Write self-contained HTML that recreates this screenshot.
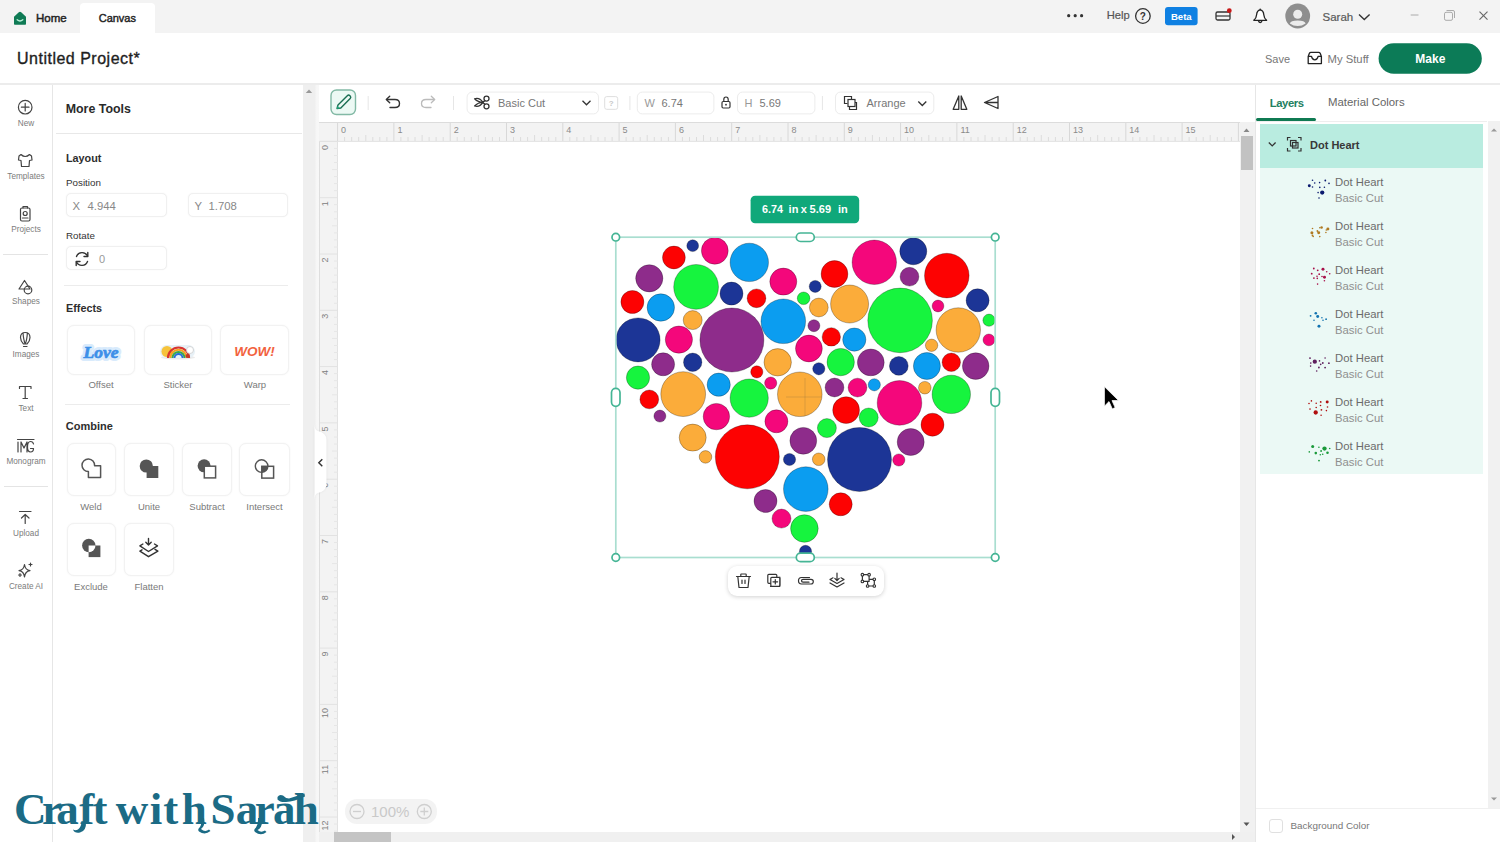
<!DOCTYPE html>
<html><head><meta charset="utf-8">
<style>
*{box-sizing:border-box;margin:0;padding:0}
html,body{width:1500px;height:842px;overflow:hidden;background:#fff;font-family:"Liberation Sans",sans-serif;color:#333}
.a{position:absolute}
.t{position:absolute;white-space:nowrap;line-height:1}
svg{position:absolute;overflow:visible}
svg text{font-family:"Liberation Sans",sans-serif}
svg text.sf{font-family:"Liberation Serif",serif}
.lrow{position:absolute;left:1260px;width:223px;height:44px}
.lt1{position:absolute;left:75px;top:9px;font-size:11.3px;color:#6b6b6b;white-space:nowrap}
.lt2{position:absolute;left:75px;top:25px;font-size:11.3px;color:#8f8f8f;white-space:nowrap}
.card{position:absolute;border:1px solid #f2f2f2;border-radius:7px;background:#fff;box-shadow:0 0 2px rgba(0,0,0,0.05)}
.lbl{position:absolute;font-size:9.5px;color:#7a7a7a;text-align:center;white-space:nowrap}
.sbl{position:absolute;left:0;width:52px;text-align:center;font-size:8.2px;color:#7c7c7c;white-space:nowrap}
.inp{position:absolute;border:1px solid #f0f0f0;border-radius:5px;background:#fff;box-shadow:0 0 1.5px rgba(0,0,0,0.06)}
</style></head>
<body>
<!-- top bar -->
<div class="a" style="left:0;top:0;width:1500px;height:33px;background:#f3f3f3"></div>
<div class="a" style="left:80px;top:2.5px;width:75px;height:31px;background:#fff;border-radius:4px 4px 0 0"></div>
<svg style="left:0;top:0" width="1500" height="33">
  <path d="M14 16.8 L18.8 12.3 Q20 11.3 21.2 12.3 L26 16.8 L26 24 Q26 24.8 25.2 24.8 L14.8 24.8 Q14 24.8 14 24 Z" fill="#0f7b55"/>
  <path d="M17.2 19.8 Q20 22.3 22.8 19.8" stroke="#b8f0d8" stroke-width="1.4" fill="none" stroke-linecap="round"/>
  <circle cx="1068.7" cy="15.7" r="1.6" fill="#333"/><circle cx="1075.2" cy="15.7" r="1.6" fill="#333"/><circle cx="1081.6" cy="15.7" r="1.6" fill="#333"/>
  <circle cx="1142.9" cy="16" r="7.3" fill="none" stroke="#333" stroke-width="1.3"/>
  <text x="1142.9" y="19.8" font-size="10" font-weight="bold" fill="#333" text-anchor="middle">?</text>
  <rect x="1165" y="7" width="32.6" height="18.3" rx="3" fill="#0f80e2"/>
  <text x="1181.3" y="19.7" font-size="9.6" font-weight="bold" fill="#fff" text-anchor="middle">Beta</text>
  <rect x="1216" y="12" width="14" height="8" rx="1.5" fill="none" stroke="#333" stroke-width="1.3"/>
  <line x1="1216" y1="16" x2="1230" y2="16" stroke="#333" stroke-width="1.2"/>
  <circle cx="1229.3" cy="10.7" r="2.4" fill="#c81818"/>
  <path d="M1253.8 20.3 Q1256.4 18.2 1256.6 14.8 Q1256.9 10.3 1260.2 9.8 Q1263.5 10.3 1263.8 14.8 Q1264 18.2 1266.6 20.3 Z" fill="#fff" stroke="#222" stroke-width="1.3" stroke-linejoin="round"/>
  <path d="M1258.4 21.2 Q1260.2 24 1262 21.2" fill="none" stroke="#222" stroke-width="1.4"/><circle cx="1260.2" cy="9.2" r="0.8" fill="#222"/>
  <circle cx="1297.7" cy="16" r="12.4" fill="#8e8e8e"/>
  <circle cx="1297.7" cy="14.3" r="4.5" fill="#ececec"/>
  <path d="M1289.8 23.5 Q1290.5 20.5 1297.7 20.5 Q1304.9 20.5 1305.6 23.5 Q1302 26.1 1297.7 26.1 Q1293.4 26.1 1289.8 23.5 Z" fill="#ececec"/>
  <path d="M1359 14.5 L1364.3 19.5 L1369.6 14.5" fill="none" stroke="#333" stroke-width="1.4"/>
  <line x1="1410.7" y1="15" x2="1418.5" y2="15" stroke="#aaa" stroke-width="1"/>
  <rect x="1444.5" y="12.3" width="8" height="8" rx="1.5" fill="none" stroke="#aaa" stroke-width="1"/>
  <path d="M1446.5 10.5 L1453 10.5 Q1454.5 10.5 1454.5 12 L1454.5 18" fill="none" stroke="#aaa" stroke-width="1"/>
  <path d="M1479.5 11.6 L1487.5 19.6 M1487.5 11.6 L1479.5 19.6" stroke="#666" stroke-width="1.1"/>
</svg>
<div class="t" style="left:36px;top:12.6px;font-size:11.5px;color:#222;-webkit-text-stroke:0.45px #222">Home</div>
<div class="t" style="left:98.7px;top:12.5px;font-size:11px;color:#222;-webkit-text-stroke:0.4px #222">Canvas</div>
<div class="t" style="left:1106.7px;top:10.4px;font-size:11.2px;color:#555;-webkit-text-stroke:0.2px #555">Help</div>
<div class="t" style="left:1322.5px;top:11.5px;font-size:11.5px;color:#5a5a5a;-webkit-text-stroke:0.2px #5a5a5a">Sarah</div>

<!-- header -->
<div class="a" style="left:0;top:82.5px;width:1500px;height:2px;background:#ececec"></div>
<div class="t" style="left:17px;top:51px;font-size:16px;color:#1e1e1e;letter-spacing:0.5px;-webkit-text-stroke:0.35px #1e1e1e">Untitled Project*</div>
<div class="t" style="left:1265px;top:54px;font-size:11px;color:#777">Save</div>
<svg style="left:0;top:0" width="1500" height="84">
  <path d="M1308.2 63.6 L1321.4 63.6 L1321.4 56.5 L1320.3 53.5 Q1319.8 52.4 1318.6 52.4 L1311 52.4 Q1309.8 52.4 1309.3 53.5 L1308.2 56.5 Z M1308.2 56.3 L1311.5 56.3 Q1312.3 59.8 1314.8 59.8 Q1317.3 59.8 1318.1 56.3 L1321.4 56.3" fill="none" stroke="#222" stroke-width="1.3" stroke-linejoin="round"/>
  <rect x="1378.6" y="43.3" width="103.2" height="30.4" rx="15.2" fill="#0c7b57"/>
  <text x="1430.3" y="62.8" font-size="12" font-weight="bold" fill="#fff" text-anchor="middle">Make</text>
</svg>
<div class="t" style="left:1327.5px;top:53.5px;font-size:11.3px;color:#777">My Stuff</div>

<!-- left sidebar -->
<div class="a" style="left:52px;top:85px;width:1px;height:757px;background:#e6e6e6"></div>
<div class="a" style="left:3px;top:254.2px;width:44.5px;height:1.2px;background:#e4e4e4"></div>
<div class="a" style="left:4px;top:486px;width:44px;height:1.2px;background:#e4e4e4"></div>
<svg style="left:0;top:0" width="52" height="842">
  <g fill="none" stroke="#444" stroke-width="1.2" stroke-linejoin="round" stroke-linecap="round">
  <circle cx="25.2" cy="107.2" r="6.8"/><path d="M25.2 103.4 V111 M21.4 107.2 H29"/>
  <path d="M21 154.5 L19 156 L18.5 160 L21 160.5 L21.5 166.5 L29 166.5 L29.5 160.5 L32 160 L31.5 156 L29.5 154.5 Q27.5 156.5 25.2 156.5 Q23 156.5 21 154.5 Z"/>
  <rect x="20.5" y="208" width="9.5" height="13" rx="1.5"/><circle cx="25.2" cy="213.5" r="2"/><path d="M22.5 218 H28"/><path d="M23 208 V206.5 H27.5 V208"/>
  <path d="M19 289 L24.5 280.5 L30 289 Z"/><circle cx="28" cy="290" r="3.8"/>
  <path d="M25.2 332.5 Q20.5 332.5 20.5 337.5 Q20.5 341 23.5 344 L27 344 Q30 341 30 337.5 Q30 332.5 25.2 332.5 Z M23 332.8 Q23.5 340 25.2 344 M27.4 332.8 Q27 340 25.2 344 M23.5 346.5 H27"/>
  <path d="M19.5 386.5 H31 M25.2 386.5 V398.5 M19.5 386.5 V388.5 M31 386.5 V388.5 M23 398.5 H27.5"/>
  <path d="M17.5 439.5 H34 M18 442 V452 M21 442 V452 M21 442 L24 448 L27 442 V452 M33.5 444 Q33 441.5 30.5 441.5 Q27.5 441.5 27.5 447 Q27.5 452 30.5 452 Q33.5 452 33.5 448.5 H30.5"/>
  <path d="M19.5 511.5 H31 M25.2 523.5 V514.5 M21.5 518 L25.2 514.5 L29 518"/>
  <path d="M24.5 564.5 Q25.2 570 30 570.7 Q25.2 571.4 24.5 577 Q23.8 571.4 19 570.7 Q23.8 570 24.5 564.5 Z"/>
  <path d="M30.5 563 L30.5 566 M29 564.5 H32 M20 573.5 V576.5 M18.5 575 H21.5"/>
  </g>
</svg>
<div class="sbl" style="top:118.5px">New</div>
<div class="sbl" style="top:172px">Templates</div>
<div class="sbl" style="top:225px">Projects</div>
<div class="sbl" style="top:297px">Shapes</div>
<div class="sbl" style="top:350px">Images</div>
<div class="sbl" style="top:403.5px">Text</div>
<div class="sbl" style="top:457px">Monogram</div>
<div class="sbl" style="top:529px">Upload</div>
<div class="sbl" style="top:582px">Create AI</div>

<!-- More tools panel -->
<div class="t" style="left:65.7px;top:103px;font-size:12.4px;font-weight:bold;color:#2a2a2a">More Tools</div>
<div class="a" style="left:56px;top:133px;width:246px;height:1px;background:#e8e8e8"></div>
<div class="t" style="left:66px;top:152.5px;font-size:10.8px;font-weight:bold;color:#2e2e2e">Layout</div>
<div class="t" style="left:66px;top:177.5px;font-size:9.8px;color:#333">Position</div>
<div class="inp" style="left:65.7px;top:192.6px;width:101.2px;height:24.4px"></div>
<div class="inp" style="left:188.2px;top:192.6px;width:100.2px;height:24.4px"></div>
<div class="t" style="left:72.5px;top:200.5px;font-size:11.3px;color:#888">X</div>
<div class="t" style="left:87.5px;top:200.5px;font-size:11.3px;color:#888">4.944</div>
<div class="t" style="left:194.5px;top:200.5px;font-size:11.3px;color:#888">Y</div>
<div class="t" style="left:208.5px;top:200.5px;font-size:11.3px;color:#888">1.708</div>
<div class="t" style="left:66px;top:230.5px;font-size:9.8px;color:#333">Rotate</div>
<div class="inp" style="left:65.7px;top:245.9px;width:101.2px;height:24.3px"></div>
<svg style="left:0;top:0" width="300" height="600">
  <g fill="none" stroke="#333" stroke-width="1.4" stroke-linecap="round">
  <path d="M76.5 256.5 A6 6 0 0 1 87.5 256"/><path d="M87.5 261.5 A6 6 0 0 1 76.5 262"/>
  <path d="M87.8 252.5 L87.8 256.5 L84 256.5" stroke-linejoin="round"/><path d="M76.2 265.5 L76.2 261.5 L80 261.5" stroke-linejoin="round"/>
  </g>
</svg>
<div class="t" style="left:99px;top:254px;font-size:11px;color:#999">0</div>
<div class="a" style="left:64px;top:284.5px;width:224px;height:1px;background:#ececec"></div>
<div class="t" style="left:66px;top:302.7px;font-size:10.8px;font-weight:bold;color:#2e2e2e">Effects</div>
<div class="card" style="left:66.5px;top:325.4px;width:68.5px;height:50px"></div>
<div class="card" style="left:143.6px;top:325.4px;width:68.5px;height:50px"></div>
<div class="card" style="left:219.8px;top:325.4px;width:69.4px;height:50px"></div>
<svg style="left:0;top:0" width="300" height="600">
  <text class="sf" x="101" y="357.5" font-size="17.5" font-weight="bold" font-style="italic" fill="#d9ebfc" stroke="#d9ebfc" stroke-width="6" stroke-linejoin="round" text-anchor="middle">Love</text>
  <text class="sf" x="101" y="357.5" font-size="17.5" font-weight="bold" font-style="italic" fill="#3d8fe8" stroke="#3d8fe8" stroke-width="0.7" text-anchor="middle">Love</text>
  <ellipse cx="178" cy="357.5" rx="17" ry="2" fill="rgba(0,0,0,0.08)"/>
  <rect x="160" y="345" width="35" height="13" rx="6.5" fill="#e8f1f7"/>
  <circle cx="167" cy="351.5" r="5.5" fill="#f6c33b"/>
  <path d="M168 358 A10.5 10.5 0 0 1 189 358" fill="none" stroke="#d8352f" stroke-width="2.2"/>
  <path d="M170.3 358 A8.2 8.2 0 0 1 186.7 358" fill="none" stroke="#f7a11a" stroke-width="2"/>
  <path d="M172.4 358 A6.1 6.1 0 0 1 184.6 358" fill="none" stroke="#3aa84a" stroke-width="2"/>
  <path d="M174.4 358 A4.1 4.1 0 0 1 182.6 358" fill="none" stroke="#2a6fd6" stroke-width="2"/>
  <circle cx="190" cy="350" r="3.5" fill="#fff" stroke="#ccc" stroke-width="0.8"/>
  <circle cx="187.5" cy="356" r="2" fill="#c0392b"/>
  <text x="254.5" y="355.5" font-size="13.5" font-weight="bold" font-style="italic" fill="#f2623e" text-anchor="middle" transform="translate(254.5,0) scale(1,1) translate(-254.5,0)">WOW!</text>
</svg>
<div class="lbl" style="left:66px;width:70px;top:379px">Offset</div>
<div class="lbl" style="left:143px;width:70px;top:379px">Sticker</div>
<div class="lbl" style="left:220px;width:70px;top:379px">Warp</div>
<div class="a" style="left:64.6px;top:403.5px;width:225px;height:1px;background:#ececec"></div>
<div class="t" style="left:65.8px;top:420.8px;font-size:11px;font-weight:bold;color:#2e2e2e">Combine</div>
<div class="card" style="left:66.5px;top:443.2px;width:49.7px;height:52.8px"></div>
<div class="card" style="left:124.2px;top:443.2px;width:49.9px;height:52.8px"></div>
<div class="card" style="left:182px;top:443.2px;width:50px;height:52.8px"></div>
<div class="card" style="left:239.4px;top:443.2px;width:50.4px;height:52.8px"></div>
<div class="card" style="left:66.5px;top:522.8px;width:49.7px;height:53.6px"></div>
<div class="card" style="left:124.2px;top:522.8px;width:49.9px;height:53.6px"></div>
<svg style="left:0;top:0" width="300" height="600">
  <path d="M88.4 477.6 L100.6 477.6 L100.6 465.7 L94.6 465.7 A6.3 6.3 0 1 0 88.4 471.6 Z" fill="none" stroke="#555" stroke-width="1.5" stroke-linejoin="round"/>
  <g fill="#555">
   <circle cx="146.3" cy="466" r="6.6"/><rect x="146.6" y="466" width="11.7" height="12"/>
   <circle cx="204.1" cy="465.8" r="6.5"/>
  </g>
  <rect x="204.3" y="466.2" width="11.3" height="11.7" fill="#fff" stroke="#555" stroke-width="1.5"/>
  <circle cx="261.6" cy="466.1" r="6.3" fill="none" stroke="#555" stroke-width="1.4"/>
  <rect x="261.8" y="466.3" width="11.8" height="11.8" fill="none" stroke="#555" stroke-width="1.5"/>
  <path d="M261.8 466.3 H267.9 A6.3 6.3 0 0 1 261.8 472.4 Z" fill="#555"/>
  <circle cx="88.8" cy="545.5" r="6.7" fill="#555"/>
  <rect x="88.6" y="545.5" width="11.8" height="11.6" fill="#555"/>
  <path d="M88.6 545.5 H95.5 A6.7 6.7 0 0 1 88.6 552.2 Z" fill="#fff"/>
  <g stroke="#333" stroke-width="1.4" fill="none" stroke-linejoin="round" stroke-linecap="round">
   <path d="M142.9 544 L139.9 545.9 L148.5 551.5 L157.5 545.9 L154.5 544"/>
   <path d="M142 549.8 L139.9 551.1 L148.5 556.7 L157.9 551.1 L155 549.3"/>
   <path d="M148.5 538.4 V545 M145.8 542.3 L148.5 545 L151.2 542.3"/>
  </g>
</svg>
<div class="lbl" style="left:66px;width:50px;top:501.3px">Weld</div>
<div class="lbl" style="left:124px;width:50px;top:501.3px">Unite</div>
<div class="lbl" style="left:182px;width:50px;top:501.3px">Subtract</div>
<div class="lbl" style="left:239px;width:51px;top:501.3px">Intersect</div>
<div class="lbl" style="left:66px;width:50px;top:580.5px">Exclude</div>
<div class="lbl" style="left:124px;width:50px;top:580.5px">Flatten</div>

<!-- panel scroll strip -->
<div class="a" style="left:302.5px;top:85px;width:16.5px;height:757px;background:linear-gradient(to right,#efefef 0,#efefef 12px,#f6f6f6 13px,#f8f8f8 16.5px)"></div>
<svg style="left:0;top:0" width="330" height="842">
  <path d="M305.8 93 L309 89.5 L312.2 93 Z" fill="#999"/>
</svg>

<!-- canvas toolbar -->
<svg style="left:0;top:0" width="1260" height="122">
  <rect x="331" y="90" width="24.5" height="24.5" rx="5.5" fill="#ecf9f4" stroke="#82b9a5" stroke-width="1.4"/>
  <path d="M337 108.5 L338 105 L347.3 95.7 Q348.6 94.5 349.9 95.7 L350.2 96 Q351.4 97.3 350.2 98.6 L340.8 108 Z" fill="none" stroke="#1a6e52" stroke-width="1.4" stroke-linejoin="round"/>
  <path d="M337 108.7 L337.6 106 L339.8 108.2 Z" fill="#22b586"/>
  <line x1="368.2" y1="96" x2="368.2" y2="110" stroke="#e6e6e6" stroke-width="1"/>
  <path d="M387 99.5 H395 Q399.5 99.5 399.5 103.5 Q399.5 107.5 395 107.5 H390" fill="none" stroke="#333" stroke-width="1.4" stroke-linecap="round"/>
  <path d="M389.7 96.3 L386.3 99.5 L389.7 102.7" fill="none" stroke="#333" stroke-width="1.4" stroke-linecap="round" stroke-linejoin="round"/>
  <path d="M434 99.5 H426 Q421.5 99.5 421.5 103.5 Q421.5 107.5 426 107.5 H431" fill="none" stroke="#bbb" stroke-width="1.3" stroke-linecap="round"/>
  <path d="M431.3 96.3 L434.7 99.5 L431.3 102.7" fill="none" stroke="#bbb" stroke-width="1.3" stroke-linecap="round" stroke-linejoin="round"/>
  <line x1="453.5" y1="96" x2="453.5" y2="110" stroke="#e6e6e6" stroke-width="1"/>
  <rect x="467.1" y="92.1" width="131.4" height="21.8" rx="5" fill="#fff" stroke="#ececec" stroke-width="1"/>
  <g fill="none" stroke="#333" stroke-width="1.3">
   <circle cx="486.5" cy="98.6" r="2.5"/><circle cx="486.5" cy="106.3" r="2.5"/>
   <path d="M474.6 98.8 Q479.5 97.2 483 102.4 Q478 102.4 474.6 98.8 Z M474.6 106 Q479.5 107.6 483 102.4 Q478 102.4 474.6 106 Z M482.5 102.4 L485 100.6 M482.5 102.4 L485 104.2" stroke-linejoin="round"/>
  </g>
  <path d="M582.5 100.8 L586.5 104.8 L590.5 100.8" fill="none" stroke="#333" stroke-width="1.3"/>
  <rect x="604.7" y="96.6" width="13" height="12.7" rx="2" fill="#fff" stroke="#dedede" stroke-width="1"/>
  <text x="611.2" y="106" font-size="8" fill="#c8c8c8" text-anchor="middle" font-weight="bold">?</text>
  <line x1="629.9" y1="96" x2="629.9" y2="110" stroke="#e6e6e6" stroke-width="1"/>
  <rect x="637.3" y="92.1" width="76.6" height="21.8" rx="5" fill="#fff" stroke="#ececec" stroke-width="1"/>
  <rect x="737.5" y="92.1" width="77.4" height="21.8" rx="5" fill="#fff" stroke="#ececec" stroke-width="1"/>
  <g fill="none" stroke="#333" stroke-width="1.2">
   <rect x="722" y="101.5" width="8" height="6.5" rx="1.2"/><path d="M723.8 101.5 V99.5 Q723.8 97 726 97 Q728.2 97 728.2 99.5 V101.5"/>
  </g>
  <circle cx="726" cy="104.7" r="0.9" fill="#333"/>
  <line x1="822.4" y1="96" x2="822.4" y2="110" stroke="#e6e6e6" stroke-width="1"/>
  <rect x="835.5" y="92.1" width="98.3" height="21.8" rx="5" fill="#fff" stroke="#ececec" stroke-width="1"/>
  <g fill="none" stroke="#333" stroke-width="1.2">
   <path d="M847.5 103.5 H844.5 V96.5 H851.5 V99"/><rect x="848" y="99.5" width="7" height="7"/><path d="M849.5 107 V109.5 H856.5 V102.5 H855"/>
  </g>
  <path d="M918.3 101.5 L922.3 105.5 L926.3 101.5" fill="none" stroke="#333" stroke-width="1.3"/>
  <g fill="none" stroke="#333" stroke-width="1.3" stroke-linejoin="round">
   <path d="M958.8 96 L953.2 109.3 H958.8 Z M961.2 96 L966.8 109.3 H961.2 Z"/>
   <path d="M998 96.5 L984.5 102.5 L998 108.5 Z M984.5 102.5 H998"/>
  </g>
</svg>
<div class="t" style="left:498px;top:97.5px;font-size:11px;color:#777">Basic Cut</div>
<div class="t" style="left:644.5px;top:97.5px;font-size:11px;color:#999">W</div>
<div class="t" style="left:661.5px;top:97.5px;font-size:11px;color:#777">6.74</div>
<div class="t" style="left:744.5px;top:97.5px;font-size:11px;color:#999">H</div>
<div class="t" style="left:759.5px;top:97.5px;font-size:11px;color:#777">5.69</div>
<div class="t" style="left:866.5px;top:97.5px;font-size:11px;color:#777">Arrange</div>

<!-- rulers -->
<div class="a" style="left:319px;top:122px;width:921px;height:19.4px;background:#f3f3f3;border-top:1px solid #dcdcdc"></div>
<div class="a" style="left:319px;top:141px;width:19px;height:691px;background:#f3f3f3;border-left:1px solid #dedede;border-right:1px solid #e2e2e2"></div>
<svg style="left:0;top:0" width="1500" height="842">
<line x1="337.6" y1="123" x2="337.6" y2="141" stroke="#d8d8d8" stroke-width="1"/>
<text x="341.1" y="133" font-size="9" fill="#8a8a8a">0</text>
<line x1="344.6" y1="137" x2="344.6" y2="141" stroke="#dcdcdc" stroke-width="1"/>
<line x1="351.7" y1="137" x2="351.7" y2="141" stroke="#dcdcdc" stroke-width="1"/>
<line x1="358.7" y1="137" x2="358.7" y2="141" stroke="#dcdcdc" stroke-width="1"/>
<line x1="365.8" y1="135" x2="365.8" y2="141" stroke="#dcdcdc" stroke-width="1"/>
<line x1="372.8" y1="137" x2="372.8" y2="141" stroke="#dcdcdc" stroke-width="1"/>
<line x1="379.8" y1="137" x2="379.8" y2="141" stroke="#dcdcdc" stroke-width="1"/>
<line x1="386.9" y1="137" x2="386.9" y2="141" stroke="#dcdcdc" stroke-width="1"/>
<line x1="393.9" y1="123" x2="393.9" y2="141" stroke="#d8d8d8" stroke-width="1"/>
<text x="397.4" y="133" font-size="9" fill="#8a8a8a">1</text>
<line x1="400.9" y1="137" x2="400.9" y2="141" stroke="#dcdcdc" stroke-width="1"/>
<line x1="408.0" y1="137" x2="408.0" y2="141" stroke="#dcdcdc" stroke-width="1"/>
<line x1="415.0" y1="137" x2="415.0" y2="141" stroke="#dcdcdc" stroke-width="1"/>
<line x1="422.1" y1="135" x2="422.1" y2="141" stroke="#dcdcdc" stroke-width="1"/>
<line x1="429.1" y1="137" x2="429.1" y2="141" stroke="#dcdcdc" stroke-width="1"/>
<line x1="436.1" y1="137" x2="436.1" y2="141" stroke="#dcdcdc" stroke-width="1"/>
<line x1="443.2" y1="137" x2="443.2" y2="141" stroke="#dcdcdc" stroke-width="1"/>
<line x1="450.2" y1="123" x2="450.2" y2="141" stroke="#d8d8d8" stroke-width="1"/>
<text x="453.7" y="133" font-size="9" fill="#8a8a8a">2</text>
<line x1="457.2" y1="137" x2="457.2" y2="141" stroke="#dcdcdc" stroke-width="1"/>
<line x1="464.3" y1="137" x2="464.3" y2="141" stroke="#dcdcdc" stroke-width="1"/>
<line x1="471.3" y1="137" x2="471.3" y2="141" stroke="#dcdcdc" stroke-width="1"/>
<line x1="478.4" y1="135" x2="478.4" y2="141" stroke="#dcdcdc" stroke-width="1"/>
<line x1="485.4" y1="137" x2="485.4" y2="141" stroke="#dcdcdc" stroke-width="1"/>
<line x1="492.4" y1="137" x2="492.4" y2="141" stroke="#dcdcdc" stroke-width="1"/>
<line x1="499.5" y1="137" x2="499.5" y2="141" stroke="#dcdcdc" stroke-width="1"/>
<line x1="506.5" y1="123" x2="506.5" y2="141" stroke="#d8d8d8" stroke-width="1"/>
<text x="510.0" y="133" font-size="9" fill="#8a8a8a">3</text>
<line x1="513.5" y1="137" x2="513.5" y2="141" stroke="#dcdcdc" stroke-width="1"/>
<line x1="520.6" y1="137" x2="520.6" y2="141" stroke="#dcdcdc" stroke-width="1"/>
<line x1="527.6" y1="137" x2="527.6" y2="141" stroke="#dcdcdc" stroke-width="1"/>
<line x1="534.6" y1="135" x2="534.6" y2="141" stroke="#dcdcdc" stroke-width="1"/>
<line x1="541.7" y1="137" x2="541.7" y2="141" stroke="#dcdcdc" stroke-width="1"/>
<line x1="548.7" y1="137" x2="548.7" y2="141" stroke="#dcdcdc" stroke-width="1"/>
<line x1="555.8" y1="137" x2="555.8" y2="141" stroke="#dcdcdc" stroke-width="1"/>
<line x1="562.8" y1="123" x2="562.8" y2="141" stroke="#d8d8d8" stroke-width="1"/>
<text x="566.3" y="133" font-size="9" fill="#8a8a8a">4</text>
<line x1="569.8" y1="137" x2="569.8" y2="141" stroke="#dcdcdc" stroke-width="1"/>
<line x1="576.9" y1="137" x2="576.9" y2="141" stroke="#dcdcdc" stroke-width="1"/>
<line x1="583.9" y1="137" x2="583.9" y2="141" stroke="#dcdcdc" stroke-width="1"/>
<line x1="590.9" y1="135" x2="590.9" y2="141" stroke="#dcdcdc" stroke-width="1"/>
<line x1="598.0" y1="137" x2="598.0" y2="141" stroke="#dcdcdc" stroke-width="1"/>
<line x1="605.0" y1="137" x2="605.0" y2="141" stroke="#dcdcdc" stroke-width="1"/>
<line x1="612.1" y1="137" x2="612.1" y2="141" stroke="#dcdcdc" stroke-width="1"/>
<line x1="619.1" y1="123" x2="619.1" y2="141" stroke="#d8d8d8" stroke-width="1"/>
<text x="622.6" y="133" font-size="9" fill="#8a8a8a">5</text>
<line x1="626.1" y1="137" x2="626.1" y2="141" stroke="#dcdcdc" stroke-width="1"/>
<line x1="633.2" y1="137" x2="633.2" y2="141" stroke="#dcdcdc" stroke-width="1"/>
<line x1="640.2" y1="137" x2="640.2" y2="141" stroke="#dcdcdc" stroke-width="1"/>
<line x1="647.2" y1="135" x2="647.2" y2="141" stroke="#dcdcdc" stroke-width="1"/>
<line x1="654.3" y1="137" x2="654.3" y2="141" stroke="#dcdcdc" stroke-width="1"/>
<line x1="661.3" y1="137" x2="661.3" y2="141" stroke="#dcdcdc" stroke-width="1"/>
<line x1="668.4" y1="137" x2="668.4" y2="141" stroke="#dcdcdc" stroke-width="1"/>
<line x1="675.4" y1="123" x2="675.4" y2="141" stroke="#d8d8d8" stroke-width="1"/>
<text x="678.9" y="133" font-size="9" fill="#8a8a8a">6</text>
<line x1="682.4" y1="137" x2="682.4" y2="141" stroke="#dcdcdc" stroke-width="1"/>
<line x1="689.5" y1="137" x2="689.5" y2="141" stroke="#dcdcdc" stroke-width="1"/>
<line x1="696.5" y1="137" x2="696.5" y2="141" stroke="#dcdcdc" stroke-width="1"/>
<line x1="703.5" y1="135" x2="703.5" y2="141" stroke="#dcdcdc" stroke-width="1"/>
<line x1="710.6" y1="137" x2="710.6" y2="141" stroke="#dcdcdc" stroke-width="1"/>
<line x1="717.6" y1="137" x2="717.6" y2="141" stroke="#dcdcdc" stroke-width="1"/>
<line x1="724.7" y1="137" x2="724.7" y2="141" stroke="#dcdcdc" stroke-width="1"/>
<line x1="731.7" y1="123" x2="731.7" y2="141" stroke="#d8d8d8" stroke-width="1"/>
<text x="735.2" y="133" font-size="9" fill="#8a8a8a">7</text>
<line x1="738.7" y1="137" x2="738.7" y2="141" stroke="#dcdcdc" stroke-width="1"/>
<line x1="745.8" y1="137" x2="745.8" y2="141" stroke="#dcdcdc" stroke-width="1"/>
<line x1="752.8" y1="137" x2="752.8" y2="141" stroke="#dcdcdc" stroke-width="1"/>
<line x1="759.9" y1="135" x2="759.9" y2="141" stroke="#dcdcdc" stroke-width="1"/>
<line x1="766.9" y1="137" x2="766.9" y2="141" stroke="#dcdcdc" stroke-width="1"/>
<line x1="773.9" y1="137" x2="773.9" y2="141" stroke="#dcdcdc" stroke-width="1"/>
<line x1="781.0" y1="137" x2="781.0" y2="141" stroke="#dcdcdc" stroke-width="1"/>
<line x1="788.0" y1="123" x2="788.0" y2="141" stroke="#d8d8d8" stroke-width="1"/>
<text x="791.5" y="133" font-size="9" fill="#8a8a8a">8</text>
<line x1="795.0" y1="137" x2="795.0" y2="141" stroke="#dcdcdc" stroke-width="1"/>
<line x1="802.1" y1="137" x2="802.1" y2="141" stroke="#dcdcdc" stroke-width="1"/>
<line x1="809.1" y1="137" x2="809.1" y2="141" stroke="#dcdcdc" stroke-width="1"/>
<line x1="816.1" y1="135" x2="816.1" y2="141" stroke="#dcdcdc" stroke-width="1"/>
<line x1="823.2" y1="137" x2="823.2" y2="141" stroke="#dcdcdc" stroke-width="1"/>
<line x1="830.2" y1="137" x2="830.2" y2="141" stroke="#dcdcdc" stroke-width="1"/>
<line x1="837.3" y1="137" x2="837.3" y2="141" stroke="#dcdcdc" stroke-width="1"/>
<line x1="844.3" y1="123" x2="844.3" y2="141" stroke="#d8d8d8" stroke-width="1"/>
<text x="847.8" y="133" font-size="9" fill="#8a8a8a">9</text>
<line x1="851.3" y1="137" x2="851.3" y2="141" stroke="#dcdcdc" stroke-width="1"/>
<line x1="858.4" y1="137" x2="858.4" y2="141" stroke="#dcdcdc" stroke-width="1"/>
<line x1="865.4" y1="137" x2="865.4" y2="141" stroke="#dcdcdc" stroke-width="1"/>
<line x1="872.4" y1="135" x2="872.4" y2="141" stroke="#dcdcdc" stroke-width="1"/>
<line x1="879.5" y1="137" x2="879.5" y2="141" stroke="#dcdcdc" stroke-width="1"/>
<line x1="886.5" y1="137" x2="886.5" y2="141" stroke="#dcdcdc" stroke-width="1"/>
<line x1="893.6" y1="137" x2="893.6" y2="141" stroke="#dcdcdc" stroke-width="1"/>
<line x1="900.6" y1="123" x2="900.6" y2="141" stroke="#d8d8d8" stroke-width="1"/>
<text x="904.1" y="133" font-size="9" fill="#8a8a8a">10</text>
<line x1="907.6" y1="137" x2="907.6" y2="141" stroke="#dcdcdc" stroke-width="1"/>
<line x1="914.7" y1="137" x2="914.7" y2="141" stroke="#dcdcdc" stroke-width="1"/>
<line x1="921.7" y1="137" x2="921.7" y2="141" stroke="#dcdcdc" stroke-width="1"/>
<line x1="928.8" y1="135" x2="928.8" y2="141" stroke="#dcdcdc" stroke-width="1"/>
<line x1="935.8" y1="137" x2="935.8" y2="141" stroke="#dcdcdc" stroke-width="1"/>
<line x1="942.8" y1="137" x2="942.8" y2="141" stroke="#dcdcdc" stroke-width="1"/>
<line x1="949.9" y1="137" x2="949.9" y2="141" stroke="#dcdcdc" stroke-width="1"/>
<line x1="956.9" y1="123" x2="956.9" y2="141" stroke="#d8d8d8" stroke-width="1"/>
<text x="960.4" y="133" font-size="9" fill="#8a8a8a">11</text>
<line x1="963.9" y1="137" x2="963.9" y2="141" stroke="#dcdcdc" stroke-width="1"/>
<line x1="971.0" y1="137" x2="971.0" y2="141" stroke="#dcdcdc" stroke-width="1"/>
<line x1="978.0" y1="137" x2="978.0" y2="141" stroke="#dcdcdc" stroke-width="1"/>
<line x1="985.0" y1="135" x2="985.0" y2="141" stroke="#dcdcdc" stroke-width="1"/>
<line x1="992.1" y1="137" x2="992.1" y2="141" stroke="#dcdcdc" stroke-width="1"/>
<line x1="999.1" y1="137" x2="999.1" y2="141" stroke="#dcdcdc" stroke-width="1"/>
<line x1="1006.2" y1="137" x2="1006.2" y2="141" stroke="#dcdcdc" stroke-width="1"/>
<line x1="1013.2" y1="123" x2="1013.2" y2="141" stroke="#d8d8d8" stroke-width="1"/>
<text x="1016.7" y="133" font-size="9" fill="#8a8a8a">12</text>
<line x1="1020.2" y1="137" x2="1020.2" y2="141" stroke="#dcdcdc" stroke-width="1"/>
<line x1="1027.3" y1="137" x2="1027.3" y2="141" stroke="#dcdcdc" stroke-width="1"/>
<line x1="1034.3" y1="137" x2="1034.3" y2="141" stroke="#dcdcdc" stroke-width="1"/>
<line x1="1041.3" y1="135" x2="1041.3" y2="141" stroke="#dcdcdc" stroke-width="1"/>
<line x1="1048.4" y1="137" x2="1048.4" y2="141" stroke="#dcdcdc" stroke-width="1"/>
<line x1="1055.4" y1="137" x2="1055.4" y2="141" stroke="#dcdcdc" stroke-width="1"/>
<line x1="1062.5" y1="137" x2="1062.5" y2="141" stroke="#dcdcdc" stroke-width="1"/>
<line x1="1069.5" y1="123" x2="1069.5" y2="141" stroke="#d8d8d8" stroke-width="1"/>
<text x="1073.0" y="133" font-size="9" fill="#8a8a8a">13</text>
<line x1="1076.5" y1="137" x2="1076.5" y2="141" stroke="#dcdcdc" stroke-width="1"/>
<line x1="1083.6" y1="137" x2="1083.6" y2="141" stroke="#dcdcdc" stroke-width="1"/>
<line x1="1090.6" y1="137" x2="1090.6" y2="141" stroke="#dcdcdc" stroke-width="1"/>
<line x1="1097.7" y1="135" x2="1097.7" y2="141" stroke="#dcdcdc" stroke-width="1"/>
<line x1="1104.7" y1="137" x2="1104.7" y2="141" stroke="#dcdcdc" stroke-width="1"/>
<line x1="1111.7" y1="137" x2="1111.7" y2="141" stroke="#dcdcdc" stroke-width="1"/>
<line x1="1118.8" y1="137" x2="1118.8" y2="141" stroke="#dcdcdc" stroke-width="1"/>
<line x1="1125.8" y1="123" x2="1125.8" y2="141" stroke="#d8d8d8" stroke-width="1"/>
<text x="1129.3" y="133" font-size="9" fill="#8a8a8a">14</text>
<line x1="1132.8" y1="137" x2="1132.8" y2="141" stroke="#dcdcdc" stroke-width="1"/>
<line x1="1139.9" y1="137" x2="1139.9" y2="141" stroke="#dcdcdc" stroke-width="1"/>
<line x1="1146.9" y1="137" x2="1146.9" y2="141" stroke="#dcdcdc" stroke-width="1"/>
<line x1="1154.0" y1="135" x2="1154.0" y2="141" stroke="#dcdcdc" stroke-width="1"/>
<line x1="1161.0" y1="137" x2="1161.0" y2="141" stroke="#dcdcdc" stroke-width="1"/>
<line x1="1168.0" y1="137" x2="1168.0" y2="141" stroke="#dcdcdc" stroke-width="1"/>
<line x1="1175.1" y1="137" x2="1175.1" y2="141" stroke="#dcdcdc" stroke-width="1"/>
<line x1="1182.1" y1="123" x2="1182.1" y2="141" stroke="#d8d8d8" stroke-width="1"/>
<text x="1185.6" y="133" font-size="9" fill="#8a8a8a">15</text>
<line x1="1189.1" y1="137" x2="1189.1" y2="141" stroke="#dcdcdc" stroke-width="1"/>
<line x1="1196.2" y1="137" x2="1196.2" y2="141" stroke="#dcdcdc" stroke-width="1"/>
<line x1="1203.2" y1="137" x2="1203.2" y2="141" stroke="#dcdcdc" stroke-width="1"/>
<line x1="1210.2" y1="135" x2="1210.2" y2="141" stroke="#dcdcdc" stroke-width="1"/>
<line x1="1217.3" y1="137" x2="1217.3" y2="141" stroke="#dcdcdc" stroke-width="1"/>
<line x1="1224.3" y1="137" x2="1224.3" y2="141" stroke="#dcdcdc" stroke-width="1"/>
<line x1="1231.4" y1="137" x2="1231.4" y2="141" stroke="#dcdcdc" stroke-width="1"/>
<line x1="1238.4" y1="123" x2="1238.4" y2="141" stroke="#d8d8d8" stroke-width="1"/>
<line x1="320" y1="141.4" x2="338" y2="141.4" stroke="#e2e2e2" stroke-width="1"/>
<text transform="translate(327.8,149.9) rotate(-90)" font-size="9" fill="#808080">0</text>
<line x1="334" y1="148.4" x2="338" y2="148.4" stroke="#e6e6e6" stroke-width="1"/>
<line x1="334" y1="155.5" x2="338" y2="155.5" stroke="#e6e6e6" stroke-width="1"/>
<line x1="334" y1="162.5" x2="338" y2="162.5" stroke="#e6e6e6" stroke-width="1"/>
<line x1="332" y1="169.6" x2="338" y2="169.6" stroke="#e6e6e6" stroke-width="1"/>
<line x1="334" y1="176.6" x2="338" y2="176.6" stroke="#e6e6e6" stroke-width="1"/>
<line x1="334" y1="183.6" x2="338" y2="183.6" stroke="#e6e6e6" stroke-width="1"/>
<line x1="334" y1="190.7" x2="338" y2="190.7" stroke="#e6e6e6" stroke-width="1"/>
<line x1="320" y1="197.7" x2="338" y2="197.7" stroke="#e2e2e2" stroke-width="1"/>
<text transform="translate(327.8,206.2) rotate(-90)" font-size="9" fill="#808080">1</text>
<line x1="334" y1="204.7" x2="338" y2="204.7" stroke="#e6e6e6" stroke-width="1"/>
<line x1="334" y1="211.8" x2="338" y2="211.8" stroke="#e6e6e6" stroke-width="1"/>
<line x1="334" y1="218.8" x2="338" y2="218.8" stroke="#e6e6e6" stroke-width="1"/>
<line x1="332" y1="225.8" x2="338" y2="225.8" stroke="#e6e6e6" stroke-width="1"/>
<line x1="334" y1="232.9" x2="338" y2="232.9" stroke="#e6e6e6" stroke-width="1"/>
<line x1="334" y1="239.9" x2="338" y2="239.9" stroke="#e6e6e6" stroke-width="1"/>
<line x1="334" y1="247.0" x2="338" y2="247.0" stroke="#e6e6e6" stroke-width="1"/>
<line x1="320" y1="254.0" x2="338" y2="254.0" stroke="#e2e2e2" stroke-width="1"/>
<text transform="translate(327.8,262.5) rotate(-90)" font-size="9" fill="#808080">2</text>
<line x1="334" y1="261.0" x2="338" y2="261.0" stroke="#e6e6e6" stroke-width="1"/>
<line x1="334" y1="268.1" x2="338" y2="268.1" stroke="#e6e6e6" stroke-width="1"/>
<line x1="334" y1="275.1" x2="338" y2="275.1" stroke="#e6e6e6" stroke-width="1"/>
<line x1="332" y1="282.1" x2="338" y2="282.1" stroke="#e6e6e6" stroke-width="1"/>
<line x1="334" y1="289.2" x2="338" y2="289.2" stroke="#e6e6e6" stroke-width="1"/>
<line x1="334" y1="296.2" x2="338" y2="296.2" stroke="#e6e6e6" stroke-width="1"/>
<line x1="334" y1="303.3" x2="338" y2="303.3" stroke="#e6e6e6" stroke-width="1"/>
<line x1="320" y1="310.3" x2="338" y2="310.3" stroke="#e2e2e2" stroke-width="1"/>
<text transform="translate(327.8,318.8) rotate(-90)" font-size="9" fill="#808080">3</text>
<line x1="334" y1="317.3" x2="338" y2="317.3" stroke="#e6e6e6" stroke-width="1"/>
<line x1="334" y1="324.4" x2="338" y2="324.4" stroke="#e6e6e6" stroke-width="1"/>
<line x1="334" y1="331.4" x2="338" y2="331.4" stroke="#e6e6e6" stroke-width="1"/>
<line x1="332" y1="338.4" x2="338" y2="338.4" stroke="#e6e6e6" stroke-width="1"/>
<line x1="334" y1="345.5" x2="338" y2="345.5" stroke="#e6e6e6" stroke-width="1"/>
<line x1="334" y1="352.5" x2="338" y2="352.5" stroke="#e6e6e6" stroke-width="1"/>
<line x1="334" y1="359.6" x2="338" y2="359.6" stroke="#e6e6e6" stroke-width="1"/>
<line x1="320" y1="366.6" x2="338" y2="366.6" stroke="#e2e2e2" stroke-width="1"/>
<text transform="translate(327.8,375.1) rotate(-90)" font-size="9" fill="#808080">4</text>
<line x1="334" y1="373.6" x2="338" y2="373.6" stroke="#e6e6e6" stroke-width="1"/>
<line x1="334" y1="380.7" x2="338" y2="380.7" stroke="#e6e6e6" stroke-width="1"/>
<line x1="334" y1="387.7" x2="338" y2="387.7" stroke="#e6e6e6" stroke-width="1"/>
<line x1="332" y1="394.8" x2="338" y2="394.8" stroke="#e6e6e6" stroke-width="1"/>
<line x1="334" y1="401.8" x2="338" y2="401.8" stroke="#e6e6e6" stroke-width="1"/>
<line x1="334" y1="408.8" x2="338" y2="408.8" stroke="#e6e6e6" stroke-width="1"/>
<line x1="334" y1="415.9" x2="338" y2="415.9" stroke="#e6e6e6" stroke-width="1"/>
<line x1="320" y1="422.9" x2="338" y2="422.9" stroke="#e2e2e2" stroke-width="1"/>
<text transform="translate(327.8,431.4) rotate(-90)" font-size="9" fill="#808080">5</text>
<line x1="334" y1="429.9" x2="338" y2="429.9" stroke="#e6e6e6" stroke-width="1"/>
<line x1="334" y1="437.0" x2="338" y2="437.0" stroke="#e6e6e6" stroke-width="1"/>
<line x1="334" y1="444.0" x2="338" y2="444.0" stroke="#e6e6e6" stroke-width="1"/>
<line x1="332" y1="451.0" x2="338" y2="451.0" stroke="#e6e6e6" stroke-width="1"/>
<line x1="334" y1="458.1" x2="338" y2="458.1" stroke="#e6e6e6" stroke-width="1"/>
<line x1="334" y1="465.1" x2="338" y2="465.1" stroke="#e6e6e6" stroke-width="1"/>
<line x1="334" y1="472.2" x2="338" y2="472.2" stroke="#e6e6e6" stroke-width="1"/>
<line x1="320" y1="479.2" x2="338" y2="479.2" stroke="#e2e2e2" stroke-width="1"/>
<text transform="translate(327.8,487.7) rotate(-90)" font-size="9" fill="#808080">6</text>
<line x1="334" y1="486.2" x2="338" y2="486.2" stroke="#e6e6e6" stroke-width="1"/>
<line x1="334" y1="493.3" x2="338" y2="493.3" stroke="#e6e6e6" stroke-width="1"/>
<line x1="334" y1="500.3" x2="338" y2="500.3" stroke="#e6e6e6" stroke-width="1"/>
<line x1="332" y1="507.3" x2="338" y2="507.3" stroke="#e6e6e6" stroke-width="1"/>
<line x1="334" y1="514.4" x2="338" y2="514.4" stroke="#e6e6e6" stroke-width="1"/>
<line x1="334" y1="521.4" x2="338" y2="521.4" stroke="#e6e6e6" stroke-width="1"/>
<line x1="334" y1="528.5" x2="338" y2="528.5" stroke="#e6e6e6" stroke-width="1"/>
<line x1="320" y1="535.5" x2="338" y2="535.5" stroke="#e2e2e2" stroke-width="1"/>
<text transform="translate(327.8,544.0) rotate(-90)" font-size="9" fill="#808080">7</text>
<line x1="334" y1="542.5" x2="338" y2="542.5" stroke="#e6e6e6" stroke-width="1"/>
<line x1="334" y1="549.6" x2="338" y2="549.6" stroke="#e6e6e6" stroke-width="1"/>
<line x1="334" y1="556.6" x2="338" y2="556.6" stroke="#e6e6e6" stroke-width="1"/>
<line x1="332" y1="563.6" x2="338" y2="563.6" stroke="#e6e6e6" stroke-width="1"/>
<line x1="334" y1="570.7" x2="338" y2="570.7" stroke="#e6e6e6" stroke-width="1"/>
<line x1="334" y1="577.7" x2="338" y2="577.7" stroke="#e6e6e6" stroke-width="1"/>
<line x1="334" y1="584.8" x2="338" y2="584.8" stroke="#e6e6e6" stroke-width="1"/>
<line x1="320" y1="591.8" x2="338" y2="591.8" stroke="#e2e2e2" stroke-width="1"/>
<text transform="translate(327.8,600.3) rotate(-90)" font-size="9" fill="#808080">8</text>
<line x1="334" y1="598.8" x2="338" y2="598.8" stroke="#e6e6e6" stroke-width="1"/>
<line x1="334" y1="605.9" x2="338" y2="605.9" stroke="#e6e6e6" stroke-width="1"/>
<line x1="334" y1="612.9" x2="338" y2="612.9" stroke="#e6e6e6" stroke-width="1"/>
<line x1="332" y1="619.9" x2="338" y2="619.9" stroke="#e6e6e6" stroke-width="1"/>
<line x1="334" y1="627.0" x2="338" y2="627.0" stroke="#e6e6e6" stroke-width="1"/>
<line x1="334" y1="634.0" x2="338" y2="634.0" stroke="#e6e6e6" stroke-width="1"/>
<line x1="334" y1="641.1" x2="338" y2="641.1" stroke="#e6e6e6" stroke-width="1"/>
<line x1="320" y1="648.1" x2="338" y2="648.1" stroke="#e2e2e2" stroke-width="1"/>
<text transform="translate(327.8,656.6) rotate(-90)" font-size="9" fill="#808080">9</text>
<line x1="334" y1="655.1" x2="338" y2="655.1" stroke="#e6e6e6" stroke-width="1"/>
<line x1="334" y1="662.2" x2="338" y2="662.2" stroke="#e6e6e6" stroke-width="1"/>
<line x1="334" y1="669.2" x2="338" y2="669.2" stroke="#e6e6e6" stroke-width="1"/>
<line x1="332" y1="676.2" x2="338" y2="676.2" stroke="#e6e6e6" stroke-width="1"/>
<line x1="334" y1="683.3" x2="338" y2="683.3" stroke="#e6e6e6" stroke-width="1"/>
<line x1="334" y1="690.3" x2="338" y2="690.3" stroke="#e6e6e6" stroke-width="1"/>
<line x1="334" y1="697.4" x2="338" y2="697.4" stroke="#e6e6e6" stroke-width="1"/>
<line x1="320" y1="704.4" x2="338" y2="704.4" stroke="#e2e2e2" stroke-width="1"/>
<text transform="translate(327.8,717.9) rotate(-90)" font-size="9" fill="#808080">10</text>
<line x1="334" y1="711.4" x2="338" y2="711.4" stroke="#e6e6e6" stroke-width="1"/>
<line x1="334" y1="718.5" x2="338" y2="718.5" stroke="#e6e6e6" stroke-width="1"/>
<line x1="334" y1="725.5" x2="338" y2="725.5" stroke="#e6e6e6" stroke-width="1"/>
<line x1="332" y1="732.5" x2="338" y2="732.5" stroke="#e6e6e6" stroke-width="1"/>
<line x1="334" y1="739.6" x2="338" y2="739.6" stroke="#e6e6e6" stroke-width="1"/>
<line x1="334" y1="746.6" x2="338" y2="746.6" stroke="#e6e6e6" stroke-width="1"/>
<line x1="334" y1="753.7" x2="338" y2="753.7" stroke="#e6e6e6" stroke-width="1"/>
<line x1="320" y1="760.7" x2="338" y2="760.7" stroke="#e2e2e2" stroke-width="1"/>
<text transform="translate(327.8,774.2) rotate(-90)" font-size="9" fill="#808080">11</text>
<line x1="334" y1="767.7" x2="338" y2="767.7" stroke="#e6e6e6" stroke-width="1"/>
<line x1="334" y1="774.8" x2="338" y2="774.8" stroke="#e6e6e6" stroke-width="1"/>
<line x1="334" y1="781.8" x2="338" y2="781.8" stroke="#e6e6e6" stroke-width="1"/>
<line x1="332" y1="788.8" x2="338" y2="788.8" stroke="#e6e6e6" stroke-width="1"/>
<line x1="334" y1="795.9" x2="338" y2="795.9" stroke="#e6e6e6" stroke-width="1"/>
<line x1="334" y1="802.9" x2="338" y2="802.9" stroke="#e6e6e6" stroke-width="1"/>
<line x1="334" y1="810.0" x2="338" y2="810.0" stroke="#e6e6e6" stroke-width="1"/>
<line x1="320" y1="817.0" x2="338" y2="817.0" stroke="#e2e2e2" stroke-width="1"/>
<text transform="translate(327.8,830.5) rotate(-90)" font-size="9" fill="#808080">12</text>
<line x1="334" y1="824.0" x2="338" y2="824.0" stroke="#e6e6e6" stroke-width="1"/>
<line x1="334" y1="831.1" x2="338" y2="831.1" stroke="#e6e6e6" stroke-width="1"/>
<line x1="319" y1="141.4" x2="1240" y2="141.4" stroke="#e2e2e2" stroke-width="1"/>
</svg>

<svg style="left:0;top:0" width="340" height="842">
  <path d="M314.5 424 Q314.5 430 318 431 Q326.5 433 326.5 440 L326.5 484 Q326.5 491 318 493 Q314.5 494 314.5 500 Z" fill="#fff" filter="drop-shadow(0 0 1px rgba(0,0,0,0.08))"/>
  <path d="M322.3 459.2 L318.8 462.7 L322.3 466.2" fill="none" stroke="#333" stroke-width="1.4"/>
</svg>
<!-- scrollbars -->
<div class="a" style="left:1240px;top:122px;width:15px;height:710px;background:#f1f1f1"></div>
<div class="a" style="left:1241px;top:136.3px;width:12px;height:33.4px;background:#c2c2c2"></div>
<div class="a" style="left:319px;top:832px;width:936px;height:10px;background:#f0f0f0"></div>
<div class="a" style="left:333.6px;top:832px;width:57px;height:10px;background:#c4c4c4"></div>
<svg style="left:0;top:0" width="1500" height="842">
  <path d="M1243.5 132 L1246.5 128.5 L1249.5 132 Z" fill="#888"/>
  <path d="M1243.5 822.5 L1246.5 826 L1249.5 822.5 Z" fill="#555"/>
  <path d="M1232 834 L1235 837 L1232 840 Z" fill="#555"/>
</svg>

<!-- zoom pill -->
<div class="a" style="left:345.3px;top:799.2px;width:91.7px;height:24.5px;background:#f2f2f2;border-radius:12px;opacity:0.9"></div>
<svg style="left:0;top:0" width="1500" height="842">
  <circle cx="357" cy="811.5" r="7" fill="none" stroke="#cfcfcf" stroke-width="1.3"/>
  <line x1="353" y1="811.5" x2="361" y2="811.5" stroke="#cfcfcf" stroke-width="1.3"/>
  <circle cx="424.3" cy="811.5" r="7" fill="none" stroke="#cfcfcf" stroke-width="1.3"/>
  <path d="M420.3 811.5 H428.3 M424.3 807.5 V815.5" stroke="#cfcfcf" stroke-width="1.3"/>
</svg>
<div class="t" style="left:371px;top:803.5px;font-size:15px;color:#c9c9c9">100%</div>

<!-- heart + selection -->
<svg style="left:0;top:0" width="1500" height="842">
<g stroke="rgba(0,0,0,0.3)" stroke-width="0.9">
<circle cx="673.9" cy="257.5" r="11.4" fill="#fd0202"/>
<circle cx="692.7" cy="245.7" r="5.9" fill="#1c3596"/>
<circle cx="714.8" cy="250.8" r="13.4" fill="#f4077b"/>
<circle cx="749.3" cy="262.4" r="19.2" fill="#0b9df0"/>
<circle cx="649.3" cy="278.3" r="13.6" fill="#8e2c8b"/>
<circle cx="696.1" cy="286.9" r="22.4" fill="#16f43e"/>
<circle cx="783.3" cy="281.6" r="13.5" fill="#f4077b"/>
<circle cx="731.5" cy="293.6" r="11.5" fill="#1c3596"/>
<circle cx="756.5" cy="298.3" r="9.4" fill="#fd0202"/>
<circle cx="632.4" cy="302" r="11.5" fill="#fd0202"/>
<circle cx="660.8" cy="307.5" r="13.7" fill="#0b9df0"/>
<circle cx="803.6" cy="298.3" r="6.3" fill="#16f43e"/>
<circle cx="692.7" cy="320.1" r="9.5" fill="#fbac3a"/>
<circle cx="874.3" cy="262.3" r="22.2" fill="#f4077b"/>
<circle cx="913.3" cy="251.3" r="13.5" fill="#1c3596"/>
<circle cx="946.8" cy="275.6" r="22.3" fill="#fd0202"/>
<circle cx="834.5" cy="274" r="13.4" fill="#fd0202"/>
<circle cx="909.5" cy="276.7" r="9.4" fill="#8e2c8b"/>
<circle cx="815.2" cy="286.4" r="6.0" fill="#1c3596"/>
<circle cx="849.6" cy="304" r="19.0" fill="#fbac3a"/>
<circle cx="818.8" cy="307.5" r="9.4" fill="#fbac3a"/>
<circle cx="900.1" cy="320.4" r="32.3" fill="#16f43e"/>
<circle cx="938" cy="306" r="5.9" fill="#f4077b"/>
<circle cx="977.6" cy="300.3" r="11.5" fill="#1c3596"/>
<circle cx="958.3" cy="330" r="22.2" fill="#fbac3a"/>
<circle cx="989" cy="320.2" r="6.1" fill="#16f43e"/>
<circle cx="813.9" cy="325.7" r="6.0" fill="#8e2c8b"/>
<circle cx="638.1" cy="339.9" r="22.0" fill="#1c3596"/>
<circle cx="731.9" cy="340" r="32.0" fill="#8e2c8b"/>
<circle cx="678.9" cy="339.6" r="13.6" fill="#f4077b"/>
<circle cx="783.3" cy="321.3" r="22.3" fill="#0b9df0"/>
<circle cx="663.1" cy="364.3" r="11.5" fill="#8e2c8b"/>
<circle cx="692.7" cy="362.3" r="9.2" fill="#1c3596"/>
<circle cx="777.7" cy="362.3" r="13.7" fill="#fbac3a"/>
<circle cx="808.9" cy="348.5" r="13.4" fill="#f4077b"/>
<circle cx="756.8" cy="371.9" r="6.1" fill="#fd0202"/>
<circle cx="638" cy="377.6" r="11.6" fill="#16f43e"/>
<circle cx="683.2" cy="394.1" r="22.4" fill="#fbac3a"/>
<circle cx="718.7" cy="384.7" r="11.6" fill="#0b9df0"/>
<circle cx="770.7" cy="383.1" r="6.1" fill="#f4077b"/>
<circle cx="749.2" cy="398.1" r="19.1" fill="#16f43e"/>
<circle cx="799.8" cy="394.3" r="22.3" fill="#fbac3a"/>
<circle cx="649.3" cy="399.4" r="9.4" fill="#fd0202"/>
<circle cx="716.4" cy="416.6" r="13.2" fill="#f4077b"/>
<circle cx="831.3" cy="336.9" r="9.2" fill="#fd0202"/>
<circle cx="854.3" cy="339.6" r="11.6" fill="#0b9df0"/>
<circle cx="931.6" cy="345.3" r="6.2" fill="#fbac3a"/>
<circle cx="988.9" cy="339.9" r="5.9" fill="#f4077b"/>
<circle cx="840.7" cy="362.1" r="13.7" fill="#16f43e"/>
<circle cx="870.8" cy="362.4" r="13.4" fill="#8e2c8b"/>
<circle cx="898.8" cy="365.9" r="9.4" fill="#1c3596"/>
<circle cx="926.9" cy="366" r="13.5" fill="#0b9df0"/>
<circle cx="951.3" cy="362.3" r="9.2" fill="#fd0202"/>
<circle cx="975.7" cy="366.1" r="13.3" fill="#8e2c8b"/>
<circle cx="818.8" cy="368.8" r="6.1" fill="#1c3596"/>
<circle cx="834.5" cy="387.5" r="9.4" fill="#8e2c8b"/>
<circle cx="857.5" cy="387.6" r="9.4" fill="#f4077b"/>
<circle cx="874.3" cy="384.8" r="6.1" fill="#0b9df0"/>
<circle cx="899.5" cy="402.9" r="22.3" fill="#f4077b"/>
<circle cx="924.8" cy="387.7" r="6.3" fill="#fbac3a"/>
<circle cx="951.3" cy="394.4" r="19.2" fill="#16f43e"/>
<circle cx="846.1" cy="410.1" r="13.4" fill="#fd0202"/>
<circle cx="659.9" cy="416.1" r="6.0" fill="#8e2c8b"/>
<circle cx="776.4" cy="421.3" r="11.5" fill="#f4077b"/>
<circle cx="692.7" cy="437.6" r="13.5" fill="#fbac3a"/>
<circle cx="705.5" cy="456.9" r="6.3" fill="#fbac3a"/>
<circle cx="747.3" cy="456.8" r="32.0" fill="#fd0202"/>
<circle cx="803.3" cy="440.8" r="13.4" fill="#8e2c8b"/>
<circle cx="789.5" cy="459.5" r="6.1" fill="#1c3596"/>
<circle cx="805.8" cy="489.1" r="22.3" fill="#0b9df0"/>
<circle cx="868.7" cy="417.5" r="9.5" fill="#16f43e"/>
<circle cx="932.5" cy="424.7" r="11.5" fill="#fd0202"/>
<circle cx="826.9" cy="428.1" r="9.5" fill="#16f43e"/>
<circle cx="859.5" cy="459.5" r="32.0" fill="#1c3596"/>
<circle cx="910.7" cy="442" r="13.5" fill="#8e2c8b"/>
<circle cx="898.8" cy="460" r="6.1" fill="#f4077b"/>
<circle cx="818.7" cy="459.3" r="6.3" fill="#fbac3a"/>
<circle cx="765.5" cy="501" r="11.5" fill="#8e2c8b"/>
<circle cx="840.7" cy="504.3" r="11.5" fill="#fd0202"/>
<circle cx="781.5" cy="518.6" r="9.5" fill="#f4077b"/>
<circle cx="804.4" cy="528.5" r="13.8" fill="#16f43e"/>
<circle cx="805.5" cy="551.4" r="6.1" fill="#1c3596"/>
</g>
<line x1="805" y1="378" x2="805" y2="416" stroke="rgba(140,110,60,0.28)" stroke-width="1"/>
<line x1="786" y1="397" x2="822" y2="397" stroke="rgba(140,110,60,0.28)" stroke-width="1"/>
<rect x="615.8" y="237.2" width="379.4" height="320.3" fill="none" stroke="#a9ded0" stroke-width="1.7"/>
<g fill="#fff" stroke="#45b595" stroke-width="1.7">
 <circle cx="615.8" cy="237.2" r="3.8"/><circle cx="995.2" cy="237.2" r="3.8"/>
 <circle cx="615.8" cy="557.5" r="3.8"/><circle cx="995.2" cy="557.5" r="3.8"/>
 <rect x="796.3" y="233" width="18" height="8.5" rx="4.25"/>
 <rect x="796.3" y="553.2" width="18" height="8.5" rx="4.25"/>
 <rect x="611.5" y="388.3" width="8.5" height="18" rx="4.25"/>
 <rect x="991" y="388.3" width="8.5" height="18" rx="4.25"/>
</g>
<rect x="750.6" y="195.8" width="108.6" height="27.5" rx="4.5" fill="#10a87a"/>
<g font-size="11" font-weight="bold" fill="#fff"><text x="762" y="213.3" textLength="21" lengthAdjust="spacingAndGlyphs">6.74</text><text x="788.6" y="213.3">in</text><text x="800.8" y="213.3">x</text><text x="809.6" y="213.3" textLength="21.5" lengthAdjust="spacingAndGlyphs">5.69</text><text x="838" y="213.3">in</text></g>
<path d="M1104.4 386.6 L1104.4 406.2 L1109 401.6 L1112.3 408.9 L1115.2 407.6 L1112 400.6 L1118.6 400.6 Z" fill="#000" stroke="#fff" stroke-width="0.8"/>
</svg>

<!-- float toolbar -->
<div class="a" style="left:728px;top:566px;width:156px;height:30px;background:#fff;border-radius:9px;box-shadow:0 1px 4px rgba(0,0,0,0.18)"></div>
<svg style="left:0;top:0" width="1500" height="842">
 <g fill="none" stroke="#333" stroke-width="1.2" stroke-linejoin="round" stroke-linecap="round">
  <path d="M736.5 576.5 H750.5 M740.8 576.3 V574.5 Q740.8 574 741.3 574 H745.7 Q746.2 574 746.2 574.5 V576.3 M737.8 576.5 L739 587.5 H748 L749.2 576.5 M742 580 V583.5 M745 580 V583.5"/>
  <rect x="767.8" y="574.3" width="9" height="9" rx="1"/><path d="M770.5 586.3 H779.8 V577"/><rect x="770.8" y="577.3" width="9" height="9" rx="1" fill="#fff"/>
  <path d="M775.3 779.3 M775.3 579.5 V584 M773 581.8 H777.6"/>
  <path d="M809.5 577.5 H801.5 Q798.5 577.5 798.5 580.8 Q798.5 584 801.5 584 H811 Q813.3 584 813.3 581.5 Q813.3 579.3 811 579.3 H803 Q801.5 579.3 801.5 580.8 Q801.5 582.2 803 582.2 H809"/>
  <path d="M830 579.5 L837 583.5 L844 579.5 M830 583 L837 587 L844 583 M830 579.5 L833 577.8 M844 579.5 L841 577.8 M837 573 V580.5 M834.8 578.3 L837 580.5 L839.2 578.3"/>
  <path d="M862.4 574.7 H869.1 V581.4 H862.4 Z M869.1 579.3 H874.3 V586 H867.6 V581.4"/>
  <g fill="#fff" stroke-width="1.1"><circle cx="862.4" cy="574.7" r="1.3"/><circle cx="869.1" cy="574.7" r="1.3"/><circle cx="862.4" cy="581.4" r="1.3"/><circle cx="874.3" cy="579.3" r="1.3"/><circle cx="867.6" cy="586" r="1.3"/><circle cx="874.3" cy="586" r="1.3"/></g>
 </g>
</svg>

<!-- right panel -->
<div class="a" style="left:1255px;top:85px;width:1px;height:757px;background:#e6e6e6"></div>
<div class="t" style="left:1269.7px;top:97.5px;font-size:11.3px;font-weight:bold;color:#23805f;letter-spacing:-0.4px">Layers</div>
<div class="t" style="left:1328px;top:97px;font-size:11.4px;color:#666">Material Colors</div>
<div class="a" style="left:1256px;top:117.7px;width:60px;height:3.5px;background:#0f7a52;border-radius:2px"></div>
<div class="a" style="left:1256px;top:120.5px;width:231px;height:1px;background:#eeeeee"></div>
<div class="a" style="left:1259.7px;top:124px;width:223.8px;height:43.5px;background:#b9ece0"></div>
<div class="a" style="left:1259.7px;top:167.5px;width:223.8px;height:306.5px;background:#ebf9f5"></div>
<div class="a" style="left:1487.9px;top:121px;width:12.1px;height:687px;background:#f1f1f1"></div>
<svg style="left:0;top:0" width="1500" height="842">
 <path d="M1268.8 142.5 L1272.2 145.9 L1275.6 142.5" fill="none" stroke="#333" stroke-width="1.3"/>
 <g fill="none" stroke="#333" stroke-width="1.2">
  <path d="M1287.5 140.5 V137.5 H1290.5 M1298 137.5 H1301 V140.5 M1301 148 V151 H1298 M1290.5 151 H1287.5 V148"/>
  <rect x="1290.5" y="140.5" width="5.5" height="5.5"/><rect x="1292.5" y="142.5" width="5.5" height="5.5"/>
 </g>
 <path d="M1491 131.5 L1494 128.5 L1497 131.5 Z" fill="#999"/>
 <path d="M1491 797.5 L1494 800.5 L1497 797.5 Z" fill="#999"/>
 <circle cx="1312.5" cy="180.2" r="0.80" fill="#0b1a6e"/><circle cx="1314.7" cy="183.0" r="0.80" fill="#0b1a6e"/><circle cx="1325.3" cy="180.5" r="0.91" fill="#0b1a6e"/><circle cx="1319.6" cy="182.6" r="0.80" fill="#0b1a6e"/><circle cx="1329.0" cy="183.4" r="0.80" fill="#0b1a6e"/><circle cx="1309.3" cy="185.7" r="1.47" fill="#0b1a6e"/><circle cx="1312.5" cy="187.0" r="0.80" fill="#0b1a6e"/><circle cx="1324.4" cy="187.2" r="0.80" fill="#0b1a6e"/><circle cx="1319.8" cy="187.4" r="0.80" fill="#0b1a6e"/><circle cx="1318.1" cy="192.6" r="0.80" fill="#0b1a6e"/><circle cx="1322.2" cy="192.6" r="2.14" fill="#0b1a6e"/><circle cx="1319.0" cy="198.0" r="0.80" fill="#0b1a6e"/><circle cx="1312.5" cy="228.5" r="0.80" fill="#b07a22"/><circle cx="1321.6" cy="227.6" r="1.27" fill="#b07a22"/><circle cx="1319.8" cy="227.8" r="0.80" fill="#b07a22"/><circle cx="1327.9" cy="229.1" r="1.49" fill="#b07a22"/><circle cx="1317.4" cy="231.0" r="0.92" fill="#b07a22"/><circle cx="1311.9" cy="232.8" r="1.50" fill="#b07a22"/><circle cx="1318.7" cy="232.8" r="1.49" fill="#b07a22"/><circle cx="1326.3" cy="230.0" r="0.80" fill="#b07a22"/><circle cx="1325.9" cy="232.5" r="0.80" fill="#b07a22"/><circle cx="1312.5" cy="235.4" r="0.91" fill="#b07a22"/><circle cx="1313.2" cy="236.5" r="0.80" fill="#b07a22"/><circle cx="1319.8" cy="236.6" r="0.80" fill="#b07a22"/><circle cx="1313.8" cy="268.5" r="0.90" fill="#a8104a"/><circle cx="1317.7" cy="270.3" r="0.91" fill="#a8104a"/><circle cx="1323.0" cy="269.2" r="1.49" fill="#a8104a"/><circle cx="1326.7" cy="271.7" r="0.80" fill="#a8104a"/><circle cx="1311.7" cy="273.7" r="0.91" fill="#a8104a"/><circle cx="1319.2" cy="274.2" r="0.90" fill="#a8104a"/><circle cx="1317.0" cy="276.2" r="0.80" fill="#a8104a"/><circle cx="1313.9" cy="278.1" r="0.89" fill="#a8104a"/><circle cx="1329.7" cy="273.7" r="0.80" fill="#a8104a"/><circle cx="1322.0" cy="276.5" r="0.80" fill="#a8104a"/><circle cx="1324.5" cy="277.3" r="1.49" fill="#a8104a"/><circle cx="1317.3" cy="278.4" r="0.80" fill="#a8104a"/><circle cx="1324.4" cy="280.7" r="0.80" fill="#a8104a"/><circle cx="1317.6" cy="284.1" r="0.80" fill="#a8104a"/><circle cx="1315.8" cy="313.2" r="1.29" fill="#1273b0"/><circle cx="1310.6" cy="315.8" r="0.92" fill="#1273b0"/><circle cx="1317.7" cy="316.6" r="1.49" fill="#1273b0"/><circle cx="1314.0" cy="320.3" r="0.80" fill="#1273b0"/><circle cx="1321.9" cy="317.7" r="0.80" fill="#1273b0"/><circle cx="1326.1" cy="319.2" r="0.91" fill="#1273b0"/><circle cx="1323.0" cy="320.3" r="0.80" fill="#1273b0"/><circle cx="1319.0" cy="326.3" r="1.49" fill="#1273b0"/><circle cx="1310.0" cy="358.1" r="0.91" fill="#5e1f5d"/><circle cx="1325.1" cy="358.0" r="0.80" fill="#5e1f5d"/><circle cx="1319.5" cy="360.9" r="0.80" fill="#5e1f5d"/><circle cx="1314.8" cy="361.7" r="2.14" fill="#5e1f5d"/><circle cx="1310.8" cy="363.1" r="0.80" fill="#5e1f5d"/><circle cx="1322.8" cy="363.0" r="0.90" fill="#5e1f5d"/><circle cx="1328.9" cy="363.2" r="0.89" fill="#5e1f5d"/><circle cx="1320.7" cy="364.4" r="0.80" fill="#5e1f5d"/><circle cx="1310.6" cy="366.1" r="0.80" fill="#5e1f5d"/><circle cx="1318.9" cy="367.5" r="0.90" fill="#5e1f5d"/><circle cx="1325.1" cy="367.6" r="0.91" fill="#5e1f5d"/><circle cx="1316.7" cy="371.0" r="0.80" fill="#5e1f5d"/><circle cx="1311.4" cy="400.9" r="0.80" fill="#b01010"/><circle cx="1316.2" cy="403.3" r="0.80" fill="#b01010"/><circle cx="1309.0" cy="403.5" r="0.80" fill="#b01010"/><circle cx="1327.2" cy="402.0" r="1.49" fill="#b01010"/><circle cx="1320.7" cy="401.9" r="0.90" fill="#b01010"/><circle cx="1316.2" cy="407.5" r="0.80" fill="#b01010"/><circle cx="1310.0" cy="409.1" r="0.80" fill="#b01010"/><circle cx="1320.5" cy="405.5" r="0.80" fill="#b01010"/><circle cx="1327.5" cy="407.0" r="0.80" fill="#b01010"/><circle cx="1321.4" cy="409.8" r="0.90" fill="#b01010"/><circle cx="1315.7" cy="412.5" r="2.14" fill="#b01010"/><circle cx="1326.4" cy="410.6" r="0.80" fill="#b01010"/><circle cx="1321.1" cy="415.2" r="0.80" fill="#b01010"/><circle cx="1312.7" cy="446.6" r="1.50" fill="#1a9a3a"/><circle cx="1318.9" cy="447.3" r="0.80" fill="#1a9a3a"/><circle cx="1324.5" cy="448.6" r="2.16" fill="#1a9a3a"/><circle cx="1329.7" cy="448.5" r="0.80" fill="#1a9a3a"/><circle cx="1309.3" cy="451.9" r="0.80" fill="#1a9a3a"/><circle cx="1315.8" cy="453.1" r="1.28" fill="#1a9a3a"/><circle cx="1321.1" cy="451.0" r="0.92" fill="#1a9a3a"/><circle cx="1327.5" cy="452.8" r="1.29" fill="#1a9a3a"/><circle cx="1322.7" cy="454.2" r="0.80" fill="#1a9a3a"/><circle cx="1320.3" cy="454.8" r="0.80" fill="#1a9a3a"/><circle cx="1319.0" cy="460.6" r="0.93" fill="#1a9a3a"/>
</svg>
<div class="t" style="left:1310px;top:140px;font-size:11px;font-weight:bold;color:#383838">Dot Heart</div>
<div class="lrow" style="top:167px"><div class="lt1">Dot Heart</div><div class="lt2">Basic Cut</div></div>
<div class="lrow" style="top:211px"><div class="lt1">Dot Heart</div><div class="lt2">Basic Cut</div></div>
<div class="lrow" style="top:255px"><div class="lt1">Dot Heart</div><div class="lt2">Basic Cut</div></div>
<div class="lrow" style="top:299px"><div class="lt1">Dot Heart</div><div class="lt2">Basic Cut</div></div>
<div class="lrow" style="top:343px"><div class="lt1">Dot Heart</div><div class="lt2">Basic Cut</div></div>
<div class="lrow" style="top:387px"><div class="lt1">Dot Heart</div><div class="lt2">Basic Cut</div></div>
<div class="lrow" style="top:431px"><div class="lt1">Dot Heart</div><div class="lt2">Basic Cut</div></div>

<div class="a" style="left:1256px;top:808px;width:244px;height:1px;background:#f0f0f0"></div>
<div class="a" style="left:1269px;top:818.5px;width:14px;height:14px;border:1px solid #e0e0e0;border-radius:3px;background:#fff"></div>
<div class="t" style="left:1290.5px;top:821px;font-size:9.9px;color:#777">Background Color</div>

<!-- logo watermark -->
<svg style="left:0;top:0" width="340" height="842"><g font-size="45" font-weight="bold" fill="#1b6b85" style="font-family:'Liberation Serif',serif"><text class="sf" x="13.9" y="824">C</text><text class="sf" x="42.1" y="824">r</text><text class="sf" x="56.3" y="824">a</text><text class="sf" x="79.2" y="824">f</text><text class="sf" x="92.5" y="824">t</text><text class="sf" x="115.8" y="824">w</text><text class="sf" x="149.8" y="824">i</text><text class="sf" x="163.2" y="824">t</text><text class="sf" x="181.8" y="824">h</text><text class="sf" x="210.6" y="824">S</text><text class="sf" x="235.8" y="824">a</text><text class="sf" x="254.7" y="824">r</text><text class="sf" x="273.1" y="824">a</text><text class="sf" x="293.8" y="824">h</text>
<path d="M86 822 Q86.5 831 80 832.5 Q74.5 833.5 73 829.5 Q75.5 831 78 829.5 Q81.5 827 81.5 821 Z"/>
<path d="M204 818 Q205.5 826 201 829 Q205 832.5 209 829.5 L210.5 831 Q205 835.5 199 831.5 Q197 829.5 200 827 Q202 824 201 818 Z"/>
<path d="M262 818 Q263 827 257.5 830 Q261 833 265 830.5 L266.5 832 Q261 836.5 255 832 Q253 830 256 827.5 Q258.5 824 258 818 Z"/>
<path d="M277.5 797 Q279.5 794 283 795.5 Q285 798 289 798.5 L304.5 793.5 L305 796.5 Q294 801.5 286 802 Q280 802.5 277.5 799.5 Z"/>
</g></svg>
</body></html>
